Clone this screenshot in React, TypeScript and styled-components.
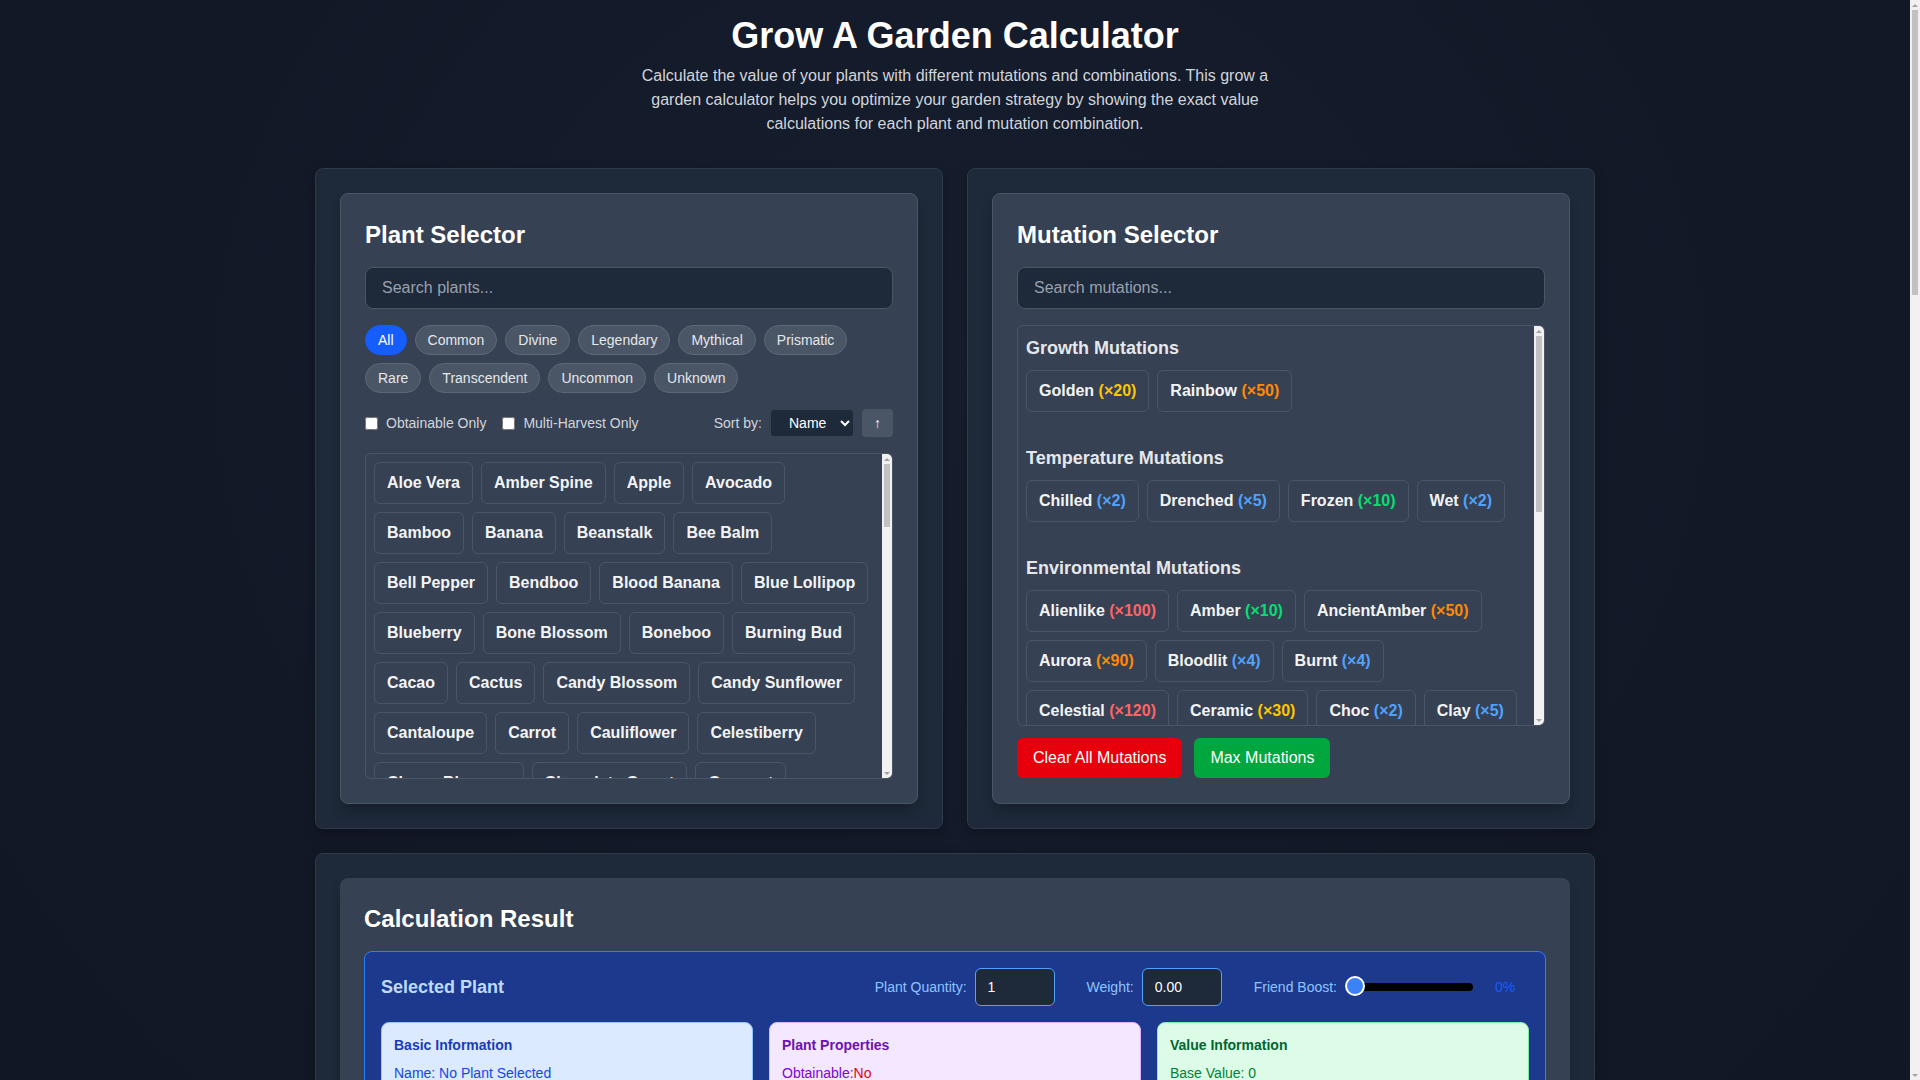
import React from "react";
import styled, { createGlobalStyle } from "styled-components";

const GlobalStyle = createGlobalStyle`
  * { box-sizing: border-box; }
  html, body { margin: 0; padding: 0; }
  body {
    background: radial-gradient(ellipse at 50% 30%, #161e2e 0%, #121826 60%, #111725 100%);
    background-color: #121826;
    font-family: "Liberation Sans", Arial, sans-serif;
    color: #ffffff;
  }
`;

/* ---------- scrollbar look-alike ---------- */

const Rail = styled.div<{ $sticky?: boolean }>`
  width: 10px;
  flex-shrink: 0;
  display: flex;
  flex-direction: column;
  background: #f1f1f1;
  ${(p) =>
    p.$sticky
      ? `position: sticky; top: 0; height: 100vh; align-self: flex-start;`
      : ``}
`;

const RailArrow = styled.div`
  height: 10px;
  display: flex;
  align-items: center;
  justify-content: center;
  flex-shrink: 0;
`;

const TriUp = styled.span`
  width: 0;
  height: 0;
  border-left: 3px solid transparent;
  border-right: 3px solid transparent;
  border-bottom: 3px solid #a3a3a3;
`;

const TriDown = styled.span`
  width: 0;
  height: 0;
  border-left: 3px solid transparent;
  border-right: 3px solid transparent;
  border-top: 3px solid #a3a3a3;
`;

const RailThumb = styled.div<{ $len: number }>`
  height: ${(p) => p.$len}px;
  margin: 0 2px;
  background: #c1c1c1;
  flex-shrink: 0;
`;

const RailSpace = styled.div`
  flex: 1;
`;

function ScrollRail({ thumb, sticky }: { thumb: number; sticky?: boolean }) {
  return (
    <Rail $sticky={sticky}>
      <RailArrow>
        <TriUp />
      </RailArrow>
      <RailThumb $len={thumb} />
      <RailSpace />
      <RailArrow>
        <TriDown />
      </RailArrow>
    </Rail>
  );
}

/* ---------- page ---------- */

const Shell = styled.div`
  display: flex;
`;

const Page = styled.main`
  flex: 1;
  min-width: 0;
  padding: 16px 16px 40px;
`;

const Container = styled.div`
  max-width: 1280px;
  margin: 0 auto;
`;

const Title = styled.h1`
  margin: 0 0 8px;
  font-size: 36px;
  line-height: 40px;
  font-weight: 700;
  color: #ffffff;
  text-align: center;
`;

const Subtitle = styled.p`
  margin: 0 auto 32px;
  max-width: 672px;
  font-size: 16px;
  line-height: 24px;
  color: #d1d5dc;
  text-align: center;
`;

const Columns = styled.div`
  display: grid;
  grid-template-columns: 1fr 1fr;
  gap: 24px;
  margin-bottom: 24px;
`;

const Panel = styled.section`
  background: #1e2939;
  border: 1px solid #2f3a4b;
  border-radius: 8px;
  padding: 24px;
  box-shadow: 0 4px 12px rgba(0, 0, 0, 0.25);
  display: flex;
  flex-direction: column;
`;

const Card = styled.div<{ $bordered?: boolean }>`
  flex: 1;
  background: #364153;
  border: ${(p) => (p.$bordered ? "1px solid #4a5565" : "none")};
  border-radius: 8px;
  padding: 25px 24px 24px;
  box-shadow: 0 8px 14px -4px rgba(0, 0, 0, 0.35);
  display: flex;
  flex-direction: column;
`;

const SectionTitle = styled.h2`
  margin: 0 0 16px;
  font-size: 24px;
  line-height: 32px;
  font-weight: 700;
  color: #ffffff;
`;

const SearchInput = styled.input`
  width: 100%;
  padding: 8px 16px;
  margin: 0 0 16px;
  background: #1e2939;
  border: 1px solid #4a5565;
  border-radius: 8px;
  color: #ffffff;
  font-family: inherit;
  font-size: 16px;
  line-height: 24px;
  outline: none;
  &::placeholder {
    color: #99a1af;
  }
`;

const PillRow = styled.div`
  display: flex;
  flex-wrap: wrap;
  gap: 8px;
  margin-bottom: 16px;
`;

const Pill = styled.button<{ $active?: boolean }>`
  padding: 4px 12px;
  border-radius: 9999px;
  font-family: inherit;
  font-size: 14px;
  line-height: 20px;
  border: 1px solid ${(p) => (p.$active ? "#155dfc" : "#5d6778")};
  background: ${(p) => (p.$active ? "#155dfc" : "#4a5565")};
  color: ${(p) => (p.$active ? "#ffffff" : "#e5e7eb")};
  cursor: pointer;
`;

const FilterRow = styled.div`
  display: flex;
  align-items: center;
  justify-content: space-between;
  height: 28px;
  margin-bottom: 16px;
`;

const CheckGroup = styled.div`
  display: flex;
  align-items: center;
  gap: 16px;
`;

const CheckLabel = styled.label`
  display: flex;
  align-items: center;
  gap: 8px;
  font-size: 14px;
  line-height: 20px;
  color: #d1d5dc;
  input {
    margin: 0;
    width: 13px;
    height: 13px;
  }
`;

const SortGroup = styled.div`
  display: flex;
  align-items: center;
`;

const SortLabel = styled.span`
  font-size: 14px;
  color: #d1d5dc;
  margin-right: 8px;
`;

const Select = styled.select`
  height: 28px;
  width: 84px;
  padding: 0 6px 0 14px;
  background: #1e2939;
  color: #ffffff;
  border: 1px solid #364153;
  border-radius: 4px;
  font-family: inherit;
  font-size: 14px;
  color-scheme: dark;
`;

const ArrowButton = styled.button`
  height: 28px;
  margin-left: 8px;
  padding: 0 12px;
  background: #4a5565;
  color: #ffffff;
  border: none;
  border-radius: 4px;
  font-family: inherit;
  font-size: 14px;
`;

const ScrollFrame = styled.div<{ $height: number }>`
  height: ${(p) => p.$height}px;
  display: flex;
  border: 1px solid #4a5565;
  border-radius: 6px;
  overflow: hidden;
`;

const ScrollArea = styled.div<{ $wrap?: boolean }>`
  flex: 1;
  min-width: 0;
  overflow-y: auto;
  scrollbar-width: none;
  padding: 8px;
  &::-webkit-scrollbar {
    display: none;
  }
  ${(p) =>
    p.$wrap
      ? `display: flex; flex-wrap: wrap; align-content: flex-start; gap: 8px;`
      : ``}
`;

const ItemButton = styled.button`
  padding: 8px 12px;
  background: transparent;
  border: 1px solid #4a5565;
  border-radius: 6px;
  color: #f3f4f6;
  font-family: inherit;
  font-size: 16px;
  line-height: 24px;
  font-weight: 700;
  cursor: pointer;
  white-space: nowrap;
`;

const Group = styled.div`
  margin-bottom: 32px;
  &:last-child {
    margin-bottom: 0;
  }
`;

const GroupTitle = styled.h3`
  margin: 0 0 8px;
  font-size: 18px;
  line-height: 28px;
  font-weight: 700;
  color: #e5e7eb;
`;

const ButtonWrap = styled.div`
  display: flex;
  flex-wrap: wrap;
  gap: 8px;
`;

const Mult = styled.span<{ $color: string }>`
  color: ${(p) => p.$color};
`;

const ActionRow = styled.div`
  display: flex;
  gap: 12px;
  margin-top: 12px;
`;

const ActionButton = styled.button<{ $bg: string }>`
  padding: 8px 16px;
  background: ${(p) => p.$bg};
  color: #ffffff;
  border: none;
  border-radius: 6px;
  font-family: inherit;
  font-size: 16px;
  line-height: 24px;
  cursor: pointer;
`;

const BlueBox = styled.div`
  background: #1c398e;
  border: 1px solid #2b7fff;
  border-radius: 8px;
  padding: 16px;
`;

const TopRow = styled.div`
  display: flex;
  align-items: center;
  justify-content: space-between;
  margin-bottom: 16px;
`;

const SelTitle = styled.h3`
  margin: 0;
  font-size: 18px;
  line-height: 28px;
  font-weight: 700;
  color: #bedbff;
`;

const Controls = styled.div`
  display: flex;
  align-items: center;
  gap: 32px;
`;

const Ctrl = styled.label`
  display: flex;
  align-items: center;
  gap: 8px;
`;

const CtrlLabel = styled.span`
  font-size: 14px;
  line-height: 20px;
  color: #8ec5ff;
`;

const NumInput = styled.input`
  width: 80px;
  padding: 8px 12px;
  background: #1e2939;
  border: 1px solid #51a2ff;
  border-radius: 6px;
  color: #ffffff;
  font-family: inherit;
  font-size: 14px;
  line-height: 20px;
  outline: none;
`;

const Range = styled.input`
  -webkit-appearance: none;
  appearance: none;
  width: 128px;
  height: 8px;
  margin: 0;
  background: #000000;
  border-radius: 4px;
  outline: none;
  &::-webkit-slider-thumb {
    -webkit-appearance: none;
    appearance: none;
    width: 20px;
    height: 20px;
    border-radius: 50%;
    background: #3b82f6;
    border: 2px solid #ffffff;
    margin-top: -3px;
  }
`;

const Pct = styled.span`
  width: 48px;
  text-align: center;
  font-size: 14px;
  color: #155dfc;
`;

const InfoGrid = styled.div`
  display: grid;
  grid-template-columns: repeat(3, 1fr);
  gap: 16px;
`;

const InfoCard = styled.div<{ $bg: string; $border: string }>`
  padding: 12px;
  background: ${(p) => p.$bg};
  border: 1px solid ${(p) => p.$border};
  border-radius: 8px;
`;

const InfoTitle = styled.h4<{ $color: string }>`
  margin: 0 0 8px;
  font-size: 14px;
  line-height: 20px;
  font-weight: 700;
  color: ${(p) => p.$color};
`;

const InfoLine = styled.p<{ $color: string }>`
  margin: 0 0 4px;
  font-size: 14px;
  line-height: 20px;
  color: ${(p) => p.$color};
`;

const Bad = styled.span`
  color: #e7000b;
`;

const rarities = [
  "All",
  "Common",
  "Divine",
  "Legendary",
  "Mythical",
  "Prismatic",
  "Rare",
  "Transcendent",
  "Uncommon",
  "Unknown",
];

const plants = [
  "Aloe Vera", "Amber Spine", "Apple", "Avocado", "Bamboo", "Banana", "Beanstalk", "Bee Balm",
  "Bell Pepper", "Bendboo", "Blood Banana", "Blue Lollipop", "Blueberry", "Bone Blossom", "Boneboo",
  "Burning Bud", "Cacao", "Cactus", "Candy Blossom", "Candy Sunflower", "Cantaloupe", "Carrot",
  "Cauliflower", "Celestiberry", "Cherry Blossom", "Chocolate Carrot", "Coconut", "Cocovine", "Corn",
  "Cranberry", "Crimson Vine", "Crocus", "Cursed Fruit", "Daffodil", "Dandelion", "Dezen",
  "Dragon Fruit", "Dragon Pepper", "Durian", "Easter Egg", "Eggplant", "Elephant Ears", "Ember Lily",
  "Feijoa", "Firefly Fern", "Foxglove", "Fossilight", "Giant Pinecone", "Glowshroom", "Grape",
  "Green Apple", "Hive Fruit", "Honeysuckle", "Horned Dinoshroom", "Ice Cream Bean", "Lavender",
  "Lemon", "Liberty Lily", "Lilac", "Lily Of The Valley", "Lime", "Lingonberry", "Loquat", "Lotus",
  "Lumira", "Mango", "Manuka Flower", "Mega Mushroom", "Mint", "Moon Blossom", "Moon Mango",
  "Moon Melon", "Moonflower", "Moonglow", "Mushroom", "Nectar Thorn", "Nectarine", "Nectarshade",
  "Nightshade", "Noble Flower", "Orange Tulip", "Papaya", "Paradise Petal", "Parasol Flower",
  "Passionfruit", "Peace Lily", "Peach", "Pear", "Pepper", "Pineapple", "Pink Lily", "Pink Tulip",
  "Pitcher Plant", "Prickly Pear", "Pumpkin", "Purple Cabbage", "Purple Dahlia", "Raspberry",
  "Red Lollipop", "Rose", "Rosy Delight", "Soul Fruit", "Spiked Mango", "Starfruit", "Stonebite",
  "Strawberry", "Succulent", "Sugar Apple", "Sugarglaze", "Suncoil", "Sunflower", "Tomato",
  "Traveler's Fruit", "Twisted Tangle", "Venus Fly Trap", "Violet Corn", "Watermelon", "Wild Carrot",
  "Zenflare",
];

type Mutation = [string, number];

const mutationGroups: { title: string; items: Mutation[] }[] = [
  { title: "Growth Mutations", items: [["Golden", 20], ["Rainbow", 50]] },
  {
    title: "Temperature Mutations",
    items: [["Chilled", 2], ["Drenched", 5], ["Frozen", 10], ["Wet", 2]],
  },
  {
    title: "Environmental Mutations",
    items: [
      ["Alienlike", 100], ["Amber", 10], ["AncientAmber", 50], ["Aurora", 90], ["Bloodlit", 4],
      ["Burnt", 4], ["Celestial", 120], ["Ceramic", 30], ["Choc", 2], ["Clay", 5],
      ["Cloudtouched", 5], ["Cooked", 10], ["Dawnbound", 150], ["Disco", 125], ["Fried", 8],
      ["Galactic", 120], ["Heavenly", 5], ["HoneyGlazed", 5], ["Infected", 75], ["Molten", 25],
      ["Moonlit", 2], ["OldAmber", 20], ["Paradisal", 100], ["Plasma", 5], ["Pollinated", 3],
      ["Sandy", 3], ["Shocked", 100], ["Sundried", 85], ["Tempestuous", 12], ["Twisted", 5],
      ["Verdant", 4], ["Voidtouched", 135], ["Windstruck", 2], ["Zombified", 25],
    ],
  },
];

const multColor = (m: number) => {
  if (m >= 100) return "#ff6467";
  if (m >= 50) return "#ff8904";
  if (m >= 20) return "#fdc700";
  if (m >= 10) return "#05df72";
  return "#51a2ff";
};

export default function App() {
  return (
    <>
      <GlobalStyle />
      <Shell>
        <Page>
          <Container>
            <Title>Grow A Garden Calculator</Title>
            <Subtitle>
              Calculate the value of your plants with different mutations and combinations. This grow a
              garden calculator helps you optimize your garden strategy by showing the exact value
              calculations for each plant and mutation combination.
            </Subtitle>

            <Columns>
              <Panel>
                <Card $bordered>
                  <SectionTitle>Plant Selector</SectionTitle>
                  <SearchInput placeholder="Search plants..." />
                  <PillRow>
                    {rarities.map((r) => (
                      <Pill key={r} $active={r === "All"}>
                        {r}
                      </Pill>
                    ))}
                  </PillRow>
                  <FilterRow>
                    <CheckGroup>
                      <CheckLabel>
                        <input type="checkbox" />
                        Obtainable Only
                      </CheckLabel>
                      <CheckLabel>
                        <input type="checkbox" />
                        Multi-Harvest Only
                      </CheckLabel>
                    </CheckGroup>
                    <SortGroup>
                      <SortLabel>Sort by:</SortLabel>
                      <Select defaultValue="name">
                        <option value="name">Name</option>
                        <option value="value">Value</option>
                        <option value="rarity">Rarity</option>
                      </Select>
                      <ArrowButton>↑</ArrowButton>
                    </SortGroup>
                  </FilterRow>
                  <ScrollFrame $height={326}>
                    <ScrollArea $wrap>
                      {plants.map((p) => (
                        <ItemButton key={p}>{p}</ItemButton>
                      ))}
                    </ScrollArea>
                    <ScrollRail thumb={63} />
                  </ScrollFrame>
                </Card>
              </Panel>

              <Panel>
                <Card $bordered>
                  <SectionTitle>Mutation Selector</SectionTitle>
                  <SearchInput placeholder="Search mutations..." />
                  <ScrollFrame $height={401}>
                    <ScrollArea>
                      {mutationGroups.map((g) => (
                        <Group key={g.title}>
                          <GroupTitle>{g.title}</GroupTitle>
                          <ButtonWrap>
                            {g.items.map(([name, m]) => (
                              <ItemButton key={name}>
                                {name} <Mult $color={multColor(m)}>(×{m})</Mult>
                              </ItemButton>
                            ))}
                          </ButtonWrap>
                        </Group>
                      ))}
                    </ScrollArea>
                    <ScrollRail thumb={176} />
                  </ScrollFrame>
                  <ActionRow>
                    <ActionButton $bg="#e7000b">Clear All Mutations</ActionButton>
                    <ActionButton $bg="#00a63e">Max Mutations</ActionButton>
                  </ActionRow>
                </Card>
              </Panel>
            </Columns>

            <Panel>
              <Card>
                <SectionTitle>Calculation Result</SectionTitle>
                <BlueBox>
                  <TopRow>
                    <SelTitle>Selected Plant</SelTitle>
                    <Controls>
                      <Ctrl>
                        <CtrlLabel>Plant Quantity:</CtrlLabel>
                        <NumInput type="number" defaultValue="1" />
                      </Ctrl>
                      <Ctrl>
                        <CtrlLabel>Weight:</CtrlLabel>
                        <NumInput type="text" defaultValue="0.00" />
                      </Ctrl>
                      <Ctrl>
                        <CtrlLabel>Friend Boost:</CtrlLabel>
                        <Range type="range" min={0} max={100} defaultValue={0} />
                        <Pct>0%</Pct>
                      </Ctrl>
                    </Controls>
                  </TopRow>
                  <InfoGrid>
                    <InfoCard $bg="#dbeafe" $border="#8ec5ff">
                      <InfoTitle $color="#193cb8">Basic Information</InfoTitle>
                      <InfoLine $color="#1447e6">Name: No Plant Selected</InfoLine>
                      <InfoLine $color="#1447e6">Rarity: Unknown</InfoLine>
                      <InfoLine $color="#1447e6">Quantity: 1</InfoLine>
                    </InfoCard>
                    <InfoCard $bg="#f3e8ff" $border="#dab2ff">
                      <InfoTitle $color="#6e11b0">Plant Properties</InfoTitle>
                      <InfoLine $color="#8200db">
                        Obtainable:<Bad>No</Bad>
                      </InfoLine>
                      <InfoLine $color="#8200db">
                        Multi-Harvest:<Bad>No</Bad>
                      </InfoLine>
                      <InfoLine $color="#8200db">Weight: 0.00 kg</InfoLine>
                    </InfoCard>
                    <InfoCard $bg="#dcfce7" $border="#7bf1a8">
                      <InfoTitle $color="#016630">Value Information</InfoTitle>
                      <InfoLine $color="#008236">Base Value: 0</InfoLine>
                      <InfoLine $color="#008236">Total Multiplier: ×1</InfoLine>
                      <InfoLine $color="#008236">Final Value: 0</InfoLine>
                    </InfoCard>
                  </InfoGrid>
                </BlueBox>
              </Card>
            </Panel>
          </Container>
        </Page>
        <ScrollRail sticky thumb={285} />
      </Shell>
    </>
  );
}
